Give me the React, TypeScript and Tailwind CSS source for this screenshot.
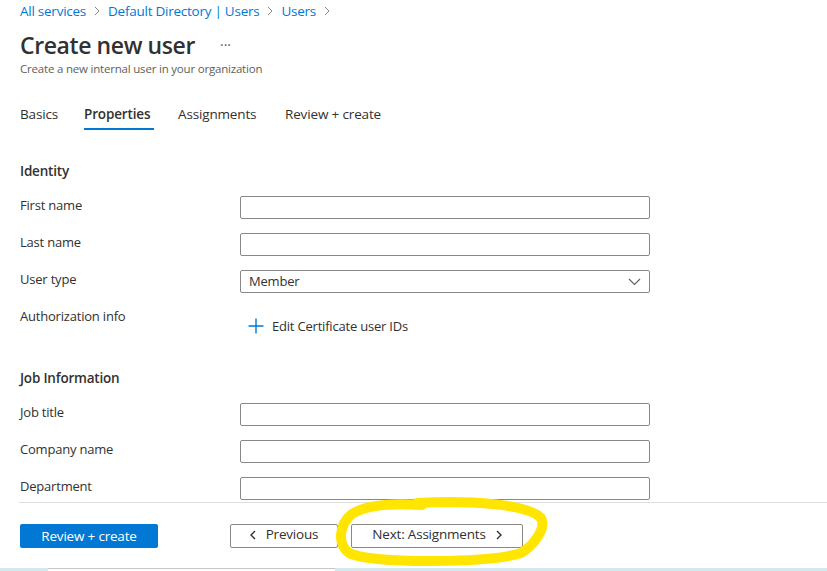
import React from "react";

const Chevron = () => (
  <svg width="8" height="10" viewBox="0 0 8 10" className="mx-[7px]">
    <path d="M2 1 L6 5 L2 9" fill="none" stroke="#8a8886" strokeWidth="1" />
  </svg>
);

const Input = () => (
  <div className="w-[410px] h-[23px] border border-[#8a8886] rounded-[2px] bg-white" />
);

const Row = ({ label, children, mt = "mt-[14px]" }: { label: string; children: React.ReactNode; mt?: string }) => (
  <div className={`flex items-start ${mt}`}>
    <div className="w-[220px] leading-[18px] text-[13px] text-[#323130]">{label}</div>
    {children}
  </div>
);

export default function App() {
  return (
    <div
      className="relative w-[827px] h-[571px] bg-white overflow-hidden text-[#323130]"
      style={{ fontFamily: '"Open Sans", "Noto Sans", sans-serif' }}
    >
      <div className="px-5">
        {/* breadcrumb */}
        <div className="h-[22px] flex items-center text-[13.5px] text-[#0078d4] tracking-[-0.25px]">
          <span>All services</span>
          <Chevron />
          <span>Default Directory | Users</span>
          <Chevron />
          <span>Users</span>
          <Chevron />
        </div>
        {/* title */}
        <div className="mt-[7px] h-[32px] flex items-center">
          <h1 className="text-[23px] font-semibold leading-[32px] tracking-[-0.4px]">Create new user</h1>
          <span className="ml-[25px] text-[14px] text-[#605e5c] leading-none">···</span>
        </div>
        <div className="h-[16px] text-[11.5px] leading-[16px] text-[#605e5c] tracking-[-0.2px]">
          Create a new internal user in your organization
        </div>
        {/* tabs */}
        <div className="mt-[27px] flex text-[13.5px] leading-[20px] tracking-[-0.15px]">
          <div className="w-[64px]">Basics</div>
          <div className="w-[94px] flex flex-col">
            <span className="font-semibold">Properties</span>
            <div className="mt-[4px] w-[70px] h-[2px] bg-[#0078d4]" />
          </div>
          <div className="w-[107px]">Assignments</div>
          <div>Review + create</div>
        </div>

        {/* Identity */}
        <div className="mt-[31px] text-[13.5px] font-semibold leading-[20px] tracking-[-0.2px]">Identity</div>
        <div className="tracking-[-0.2px]">
          <Row label="First name" mt="mt-[15px]">
            <Input />
          </Row>
          <Row label="Last name">
            <Input />
          </Row>
          <Row label="User type">
            <div className="w-[410px] h-[23px] border border-[#8a8886] rounded-[2px] bg-white flex items-center justify-between pl-[8px] pr-[8px] text-[13px]">
              <span className="mt-[1px]">Member</span>
              <svg width="13" height="8" viewBox="0 0 13 8">
                <path d="M1 1 L6.5 6.5 L12 1" fill="none" stroke="#605e5c" strokeWidth="1.1" />
              </svg>
            </div>
          </Row>
          <Row label="Authorization info">
            <div className="mt-[9px] ml-[8px] flex items-center text-[13px] leading-[20px]">
              <svg width="16" height="16" viewBox="0 0 16 16">
                <path d="M8 0.5 V15.5 M0.5 8 H15.5" stroke="#0078d4" strokeWidth="1.4" />
              </svg>
              <span className="ml-[8px]">Edit Certificate user IDs</span>
            </div>
          </Row>
        </div>

        {/* Job Information */}
        <div className="mt-[32px] text-[13.5px] font-semibold leading-[20px] tracking-[-0.2px]">Job Information</div>
        <div className="tracking-[-0.2px]">
          <Row label="Job title" mt="mt-[15px]">
            <Input />
          </Row>
          <Row label="Company name">
            <Input />
          </Row>
          <Row label="Department">
            <Input />
          </Row>
        </div>
      </div>

      {/* footer */}
      <div className="ml-[19px] mt-[2px] border-t border-[#e1dfdd]" />
      <div className="mt-[21px] px-5 flex items-center text-[13.5px] tracking-[-0.2px]">
        <button className="w-[138px] h-[24px] pt-[2px] bg-[#0078d4] text-white rounded-[2px] leading-none">
          Review + create
        </button>
        <button className="ml-[72px] w-[108px] h-[24px] pb-[3px] border border-[#8a8886] rounded-[2px] bg-white flex items-center justify-center gap-[10px]">
          <svg width="6" height="10" viewBox="0 0 6 10">
            <path d="M5 1 L1 5 L5 9" fill="none" stroke="#323130" strokeWidth="1.4" />
          </svg>
          <span>Previous</span>
        </button>
        <button className="ml-[13px] w-[172px] h-[24px] pb-[3px] border border-[#8a8886] rounded-[2px] bg-white flex items-center justify-center gap-[10px]">
          <span>Next: Assignments</span>
          <svg width="6" height="10" viewBox="0 0 6 10">
            <path d="M1 1 L5 5 L1 9" fill="none" stroke="#323130" strokeWidth="1.4" />
          </svg>
        </button>
      </div>

      {/* bottom strip */}
      <div className="absolute left-0 right-0 bottom-0 h-[3px] bg-[#d5e8f0]">
        <div className="ml-[48px] w-[287px] h-[3px] bg-white border-t border-[#c8c6c4]" />
      </div>

      {/* yellow highlight */}
      <svg className="absolute left-0 top-0 pointer-events-none" width="827" height="571">
        <path
          d="M417 503 C470 500 528 504 541 518 C547 528 533 546 521 553 C490 563 380 564 351 554 C336 546 339 524 352 514 C366 505 392 503 422 505"
          fill="none"
          stroke="#ffe500"
          strokeWidth="10"
          strokeLinecap="round"
        />
      </svg>
    </div>
  );
}
